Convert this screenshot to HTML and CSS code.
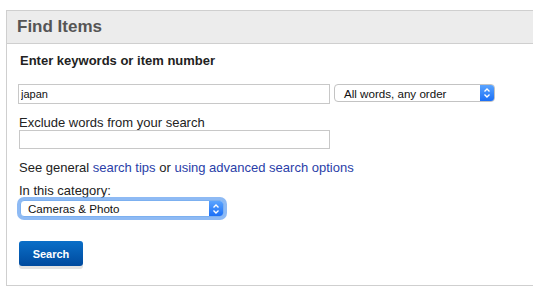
FILE: index.html
```html
<!DOCTYPE html>
<html lang="en">
  <head>
    <meta charset="UTF-8" />
    <meta name="viewport" content="width=device-width, initial-scale=1.0" />
    <title>Find Items</title>
    <link rel="stylesheet" href="styles.css">
  </head>
  <body>
    <div class="panel">
      <div class="panel-head">Find Items</div>
      <div class="panel-body">
        <h2 class="label-bold">Enter keywords or item number</h2>
        <div class="row">
          <input class="field field-main" type="text" value="japan" />
          <div class="select select-order">
            <span class="select-text">All words, any order</span>
            <span class="stepper">
              <svg width="8" height="12" viewBox="0 0 8 12">
                <path d="M1.5 4.5 L4 2 L6.5 4.5 M1.5 7.5 L4 10 L6.5 7.5" fill="none" stroke="#fff" stroke-width="1.4" />
              </svg>
            </span>
          </div>
        </div>

        <p class="label">Exclude words from your search</p>
        <input class="field field-exclude" type="text" />

        <p class="tips">
          See general <a href="#">search tips</a> or <a href="#">using advanced search options</a>
        </p>

        <p class="label label-cat">In this category:</p>
        <div class="select select-cat">
          <span class="select-text">Cameras &amp; Photo</span>
          <span class="stepper">
            <svg width="8" height="12" viewBox="0 0 8 12">
              <path d="M1.5 4.5 L4 2 L6.5 4.5 M1.5 7.5 L4 10 L6.5 7.5" fill="none" stroke="#fff" stroke-width="1.4" />
            </svg>
          </span>
        </div>

        <button class="btn-search">Search</button>
      </div>
    </div>
  </body>
</html>
```

FILE: styles.css
```css
body {
  margin: 0;
  background: #fff;
  font-family: "Liberation Sans", Arial, sans-serif;
  color: #333;
}

p,
h2 {
  margin: 0;
}

.panel {
  margin: 10px 0 0 6px;
  border-top: 1px solid #cfcfcf;
  border-left: 1px solid #cfcfcf;
  border-bottom: 1px solid #cfcfcf;
  height: 274px;
}

.panel-head {
  height: 32px;
  line-height: 32px;
  padding-left: 10px;
  background: #ececec;
  border-bottom: 1px solid #cfcfcf;
  font-size: 17px;
  font-weight: bold;
  color: #555;
}

.panel-body {
  display: flex;
  flex-direction: column;
  align-items: flex-start;
  padding-left: 11px;
}

.label-bold {
  margin: 9px 0 0 2px;
  font-size: 13px;
  line-height: 15px;
  font-weight: bold;
  color: #222;
}

.row {
  display: flex;
  align-items: flex-start;
  gap: 4px;
  margin-top: 16px;
}

.field {
  box-sizing: border-box;
  height: 19px;
  padding: 0 2px;
  border: 1px solid #c8c8c8;
  font-family: "Liberation Sans", Arial, sans-serif;
  font-size: 11px;
  color: #111;
  outline: none;
}

.field-main {
  width: 312px;
  height: 20px;
}

.field-exclude {
  width: 311px;
  margin-left: 1px;
}

.select {
  box-sizing: border-box;
  display: flex;
  align-items: center;
  height: 18px;
  border: 1px solid #c3c3c3;
  border-radius: 4px;
  background: #fff;
  overflow: hidden;
  font-size: 11.6px;
  color: #111;
}

.select-text {
  flex: 1;
  padding-left: 9px;
}

.stepper {
  display: flex;
  align-items: center;
  justify-content: center;
  width: 14px;
  height: 100%;
  background: linear-gradient(#5aa4ff, #1b6ff6);
}

.select-order {
  width: 161px;
}

.label {
  margin: 11px 0 0 1px;
  font-size: 13px;
  line-height: 15px;
  color: #222;
}

.tips {
  margin: 11px 0 0 1px;
  font-size: 13px;
  line-height: 15px;
  color: #222;
}

.tips a {
  color: #2a3ea8;
  text-decoration: none;
}

.label-cat {
  margin-top: 8px;
}

.select-cat {
  width: 204px;
  height: 17px;
  margin: 2px 0 0 2px;
  box-shadow: 0 0 0 3px rgba(104, 163, 240, 0.75);
  border-color: #7cb0f0;
}

.select-cat .select-text {
  padding-left: 7px;
}

.btn-search {
  margin: 24px 0 0 1px;
  width: 64px;
  height: 25px;
  border: 0;
  border-radius: 3px;
  background: linear-gradient(#0a6fc8, #004a9e);
  box-shadow: 0 3px 0 #e2e2e2;
  font-family: "Liberation Sans", Arial, sans-serif;
  font-size: 11px;
  font-weight: bold;
  color: #fff;
}
```
